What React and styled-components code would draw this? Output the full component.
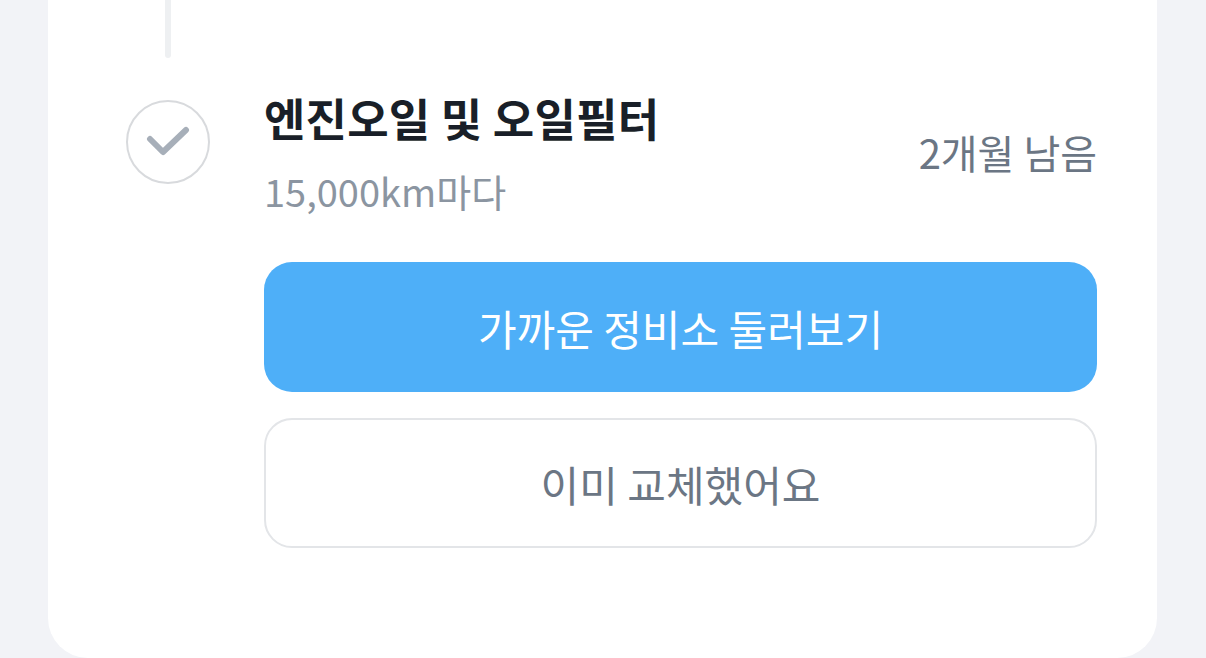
import React from "react";
import styled, { createGlobalStyle } from "styled-components";

const Global = createGlobalStyle`
  html, body { margin: 0; padding: 0; background: #f2f3f7; }
  body { font-family: "Noto Sans CJK KR", "Noto Sans", sans-serif; -webkit-font-smoothing: antialiased; }
`;

const Page = styled.div`
  height: 658px;
  padding: 0 49px 0 48px;
  box-sizing: border-box;
  background: #f2f3f7;
  overflow: hidden;
`;

const Card = styled.div`
  background: #ffffff;
  height: 658px;
  border-radius: 0 0 40px 40px;
  box-sizing: border-box;
  padding: 0 60px 0 78px;
  display: flex;
  gap: 54px;
`;

const Timeline = styled.div`
  width: 84px;
  flex: none;
  display: flex;
  flex-direction: column;
  align-items: center;
`;

const Line = styled.div`
  width: 6px;
  height: 58px;
  background: #eef0f2;
  border-radius: 0 0 3px 3px;
  margin-bottom: 42px;
`;

const Circle = styled.div`
  width: 84px;
  height: 84px;
  box-sizing: border-box;
  border: 2px solid #d8dadd;
  border-radius: 50%;
  display: flex;
  align-items: center;
  justify-content: center;
`;

const Content = styled.div`
  flex: 1;
  padding-top: 88px;
  display: flex;
  flex-direction: column;
`;

const Header = styled.div`
  display: flex;
  align-items: center;
  justify-content: space-between;
`;

const TitleBlock = styled.div`
  display: flex;
  flex-direction: column;
`;

const Title = styled.div`
  font-size: 45px;
  font-weight: 700;
  line-height: 60px;
  color: #191f28;
  letter-spacing: 0.2px;
`;

const Sub = styled.div`
  font-size: 38px;
  line-height: 50px;
  color: #8b95a1;
  margin-top: 18px;
`;

const Remain = styled.div`
  font-size: 40px;
  color: #6b7684;
  line-height: 50px;
`;

const Button = styled.button`
  display: flex;
  align-items: center;
  justify-content: center;
  width: 100%;
  height: 130px;
  border-radius: 28px;
  box-sizing: border-box;
  font-family: inherit;
  font-size: 42px;
  font-weight: 400;
  cursor: pointer;
  margin-top: ${(p) => p.$mt}px;
  background: ${(p) => (p.$primary ? "#4eaff8" : "#ffffff")};
  color: ${(p) => (p.$primary ? "#ffffff" : "#6b7684")};
  border: ${(p) => (p.$primary ? "none" : "2px solid #e3e5e8")};
`;

const Check = () => (
  <svg width="44" height="44" viewBox="0 0 44 44" fill="none">
    <path
      d="M4 16 L17 29 L40 7"
      stroke="#a7afb9"
      strokeWidth="6"
      strokeLinecap="round"
      strokeLinejoin="round"
      transform="translate(0,3)"
    />
  </svg>
);

export default function App() {
  return (
    <>
      <Global />
      <Page>
        <Card>
          <Timeline>
            <Line />
            <Circle>
              <Check />
            </Circle>
          </Timeline>
          <Content>
            <Header>
              <TitleBlock>
                <Title>엔진오일 및 오일필터</Title>
                <Sub>15,000km마다</Sub>
              </TitleBlock>
              <Remain>2개월 남음</Remain>
            </Header>
            <Button $primary $mt={46}>가까운 정비소 둘러보기</Button>
            <Button $mt={26}>이미 교체했어요</Button>
          </Content>
        </Card>
      </Page>
    </>
  );
}
